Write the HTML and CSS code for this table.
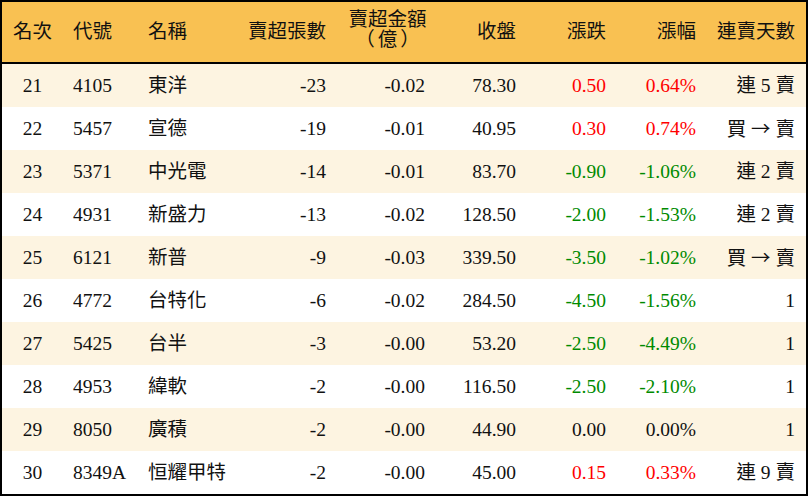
FILE: index.html
```html
<!DOCTYPE html>
<html>
<head>
<meta charset="utf-8">
<link rel="stylesheet" href="styles.css">
</head>
<body>
<table class="rank">
  <colgroup>
    <col class="c1"><col class="c2"><col class="c3"><col class="c4"><col class="c5"><col class="c6"><col class="c7"><col class="c8"><col class="c9">
  </colgroup>
  <thead>
    <tr>
      <th class="ctr">名次</th>
      <th class="lft">代號</th>
      <th class="lft">名稱</th>
      <th>賣超張數</th>
      <th class="two"><span class="l1">賣超金額</span><span class="l2">（億）</span></th>
      <th>收盤</th>
      <th>漲跌</th>
      <th>漲幅</th>
      <th class="last">連賣天數</th>
    </tr>
  </thead>
  <tbody>
    <tr class="odd"><td class="ctr">21</td><td class="lft">4105</td><td class="lft">東洋</td><td>-23</td><td>-0.02</td><td>78.30</td><td class="up">0.50</td><td class="up">0.64%</td><td class="last">連 5 賣</td></tr>
    <tr><td class="ctr">22</td><td class="lft">5457</td><td class="lft">宣德</td><td>-19</td><td>-0.01</td><td>40.95</td><td class="up">0.30</td><td class="up">0.74%</td><td class="last">買 <span class="arrow">→</span> 賣</td></tr>
    <tr class="odd"><td class="ctr">23</td><td class="lft">5371</td><td class="lft">中光電</td><td>-14</td><td>-0.01</td><td>83.70</td><td class="dn">-0.90</td><td class="dn">-1.06%</td><td class="last">連 2 賣</td></tr>
    <tr><td class="ctr">24</td><td class="lft">4931</td><td class="lft">新盛力</td><td>-13</td><td>-0.02</td><td>128.50</td><td class="dn">-2.00</td><td class="dn">-1.53%</td><td class="last">連 2 賣</td></tr>
    <tr class="odd"><td class="ctr">25</td><td class="lft">6121</td><td class="lft">新普</td><td>-9</td><td>-0.03</td><td>339.50</td><td class="dn">-3.50</td><td class="dn">-1.02%</td><td class="last">買 <span class="arrow">→</span> 賣</td></tr>
    <tr><td class="ctr">26</td><td class="lft">4772</td><td class="lft">台特化</td><td>-6</td><td>-0.02</td><td>284.50</td><td class="dn">-4.50</td><td class="dn">-1.56%</td><td class="last">1</td></tr>
    <tr class="odd"><td class="ctr">27</td><td class="lft">5425</td><td class="lft">台半</td><td>-3</td><td>-0.00</td><td>53.20</td><td class="dn">-2.50</td><td class="dn">-4.49%</td><td class="last">1</td></tr>
    <tr><td class="ctr">28</td><td class="lft">4953</td><td class="lft">緯軟</td><td>-2</td><td>-0.00</td><td>116.50</td><td class="dn">-2.50</td><td class="dn">-2.10%</td><td class="last">1</td></tr>
    <tr class="odd"><td class="ctr">29</td><td class="lft">8050</td><td class="lft">廣積</td><td>-2</td><td>-0.00</td><td>44.90</td><td>0.00</td><td>0.00%</td><td class="last">1</td></tr>
    <tr><td class="ctr">30</td><td class="lft">8349A</td><td class="lft">恒耀甲特</td><td>-2</td><td>-0.00</td><td>45.00</td><td class="up">0.15</td><td class="up">0.33%</td><td class="last">連 9 賣</td></tr>
  </tbody>
</table>
</body>
</html>
```
FILE: styles.css
```css
html, body {
  margin: 0;
  padding: 0;
  background: #ffffff;
}
.rank {
  width: 808px;
  border: 2px solid #000;
  border-collapse: separate;
  border-spacing: 0;
  table-layout: fixed;
  font-family: "Liberation Serif", "Noto Sans CJK TC", serif;
  font-size: 19.5px;
  color: #111;
}
.c1 { width: 61px; }
.c2 { width: 75px; }
.c3 { width: 100px; }
.c4 { width: 98px; }
.c5 { width: 99px; }
.c6 { width: 91px; }
.c7 { width: 90px; }
.c8 { width: 90px; }
.c9 { width: 100px; }
.rank th {
  box-sizing: border-box;
  height: 62px;
  background: #f9c152;
  border-bottom: 2px solid #000;
  font-weight: normal;
  text-align: right;
  padding: 0 10px 0 0;
  line-height: 20px;
  white-space: nowrap;
  overflow: hidden;
}
.rank td {
  box-sizing: border-box;
  height: 43px;
  padding: 0 10px 0 0;
  text-align: right;
  white-space: nowrap;
  line-height: 20px;
  overflow: hidden;
}
.rank th.two {
  text-align: center;
  padding: 0 0 4px 4px;
}
.two .l1, .two .l2 {
  display: block;
}
.two .l2 {
  letter-spacing: 3px;
  padding-left: 3px;
}
.rank .ctr {
  text-align: center;
  padding: 0;
}
.rank .lft {
  text-align: left;
  padding: 0 0 0 10px;
}
.rank .last {
  padding-right: 11px;
}
.arrow {
  font-family: "Noto Sans CJK TC", sans-serif;
  font-size: 19.5px;
  line-height: 20px;
}
tr.odd td {
  background: #fdf4e1;
}
.up { color: #ff0000; }
.dn { color: #008a00; }
```
